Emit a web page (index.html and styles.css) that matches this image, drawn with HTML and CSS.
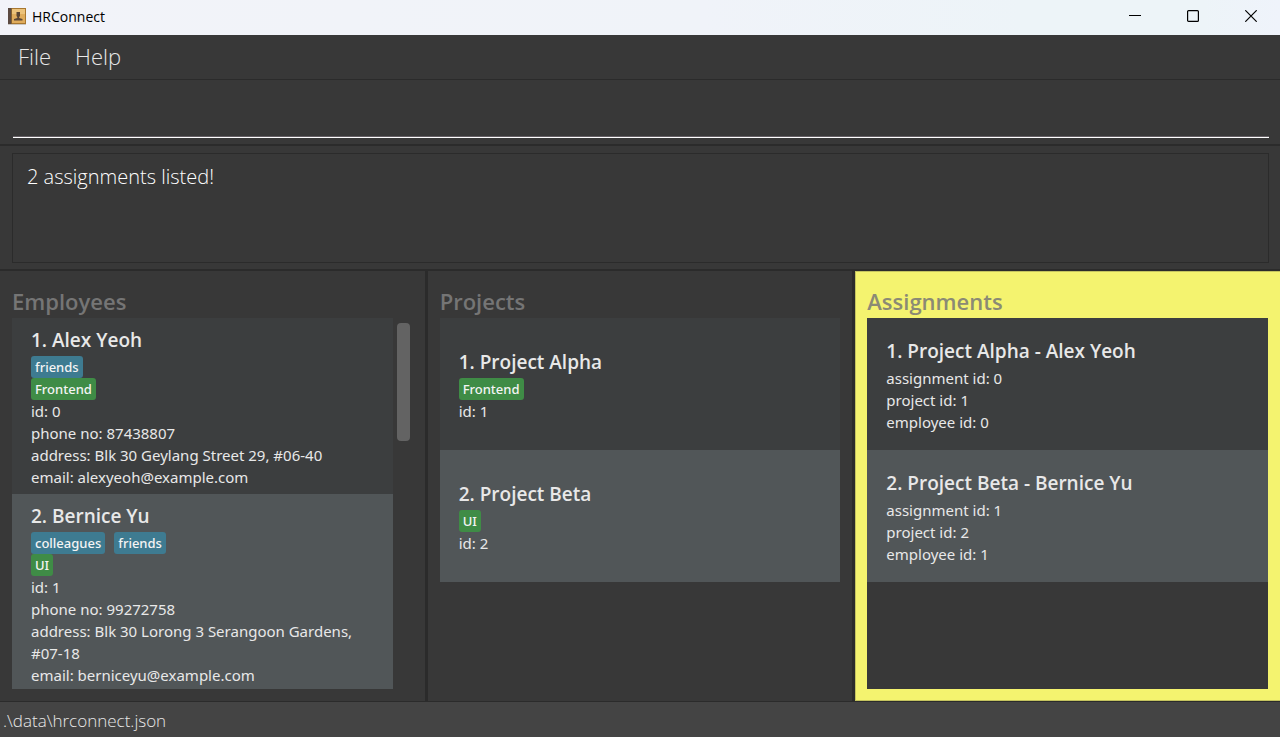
FILE: index.html
```html
<!DOCTYPE html>
<html lang="en">
<head>
<meta charset="utf-8">
<title>HRConnect</title>
<link rel="stylesheet" href="styles.css">
</head>
<body>
<header class="titlebar">
  <svg class="app-icon" width="18" height="17" viewBox="0 0 18 17" aria-hidden="true">
    <rect x="0" y="0" width="18" height="16" fill="#a8772f"/>
    <rect x="4" y="1" width="13" height="14" fill="#e0ac5c"/>
    <rect x="4" y="1" width="13" height="5" fill="#ecc27a"/>
    <rect x="0" y="0" width="3" height="16" fill="#5b4a42"/>
    <rect x="3" y="0" width="1" height="16" fill="#85602f"/>
    <path d="M8.500 4h3.500v4l-.8 1v1l3.300 1v1.500H6V11l3.300-1V9l-.8-1z" fill="#5a4535"/>
    <rect x="0" y="16" width="18" height="1" fill="#c9c5c2"/>
  </svg>
  <h1 class="app-name">HRConnect</h1>
  <div class="window-controls">
    <button class="window-button" aria-label="Minimize"><svg width="12" height="12" viewBox="0 0 12 12"><path d="M0 5.500h12" stroke="#000"/></svg></button>
    <button class="window-button" aria-label="Maximize"><svg width="12" height="12" viewBox="0 0 12 12"><rect x=".6" y=".6" width="10.800" height="10.800" rx="1" fill="none" stroke="#000" stroke-width="1.200"/></svg></button>
    <button class="window-button" aria-label="Close"><svg width="12" height="12" viewBox="0 0 12 12"><path d="M.3.300l11.400 11.400M11.700.300L.3 11.700" stroke="#000" stroke-width="1.200"/></svg></button>
  </div>
</header>
<nav class="menubar">
  <button class="menu">File</button>
  <button class="menu">Help</button>
</nav>
<div class="command-pane"><input class="command" type="text" aria-label="Command"></div>
<div class="result-pane"><output class="result">2 assignments listed!</output></div>
<main class="panels">
  <section class="panel">
    <h2 class="panel-title">Employees</h2>
    <div class="list-row">
      <ul class="list">
        <li class="card">
          <h3 class="name">1. Alex Yeoh</h3>
          <div class="tags"><span class="tag">friends</span></div>
          <div class="tags"><span class="tag skill">Frontend</span></div>
          <p>id: 0</p>
          <p>phone no: 87438807</p>
          <p>address: Blk 30 Geylang Street 29, #06-40</p>
          <p>email: alexyeoh@example.com</p>
        </li>
        <li class="card">
          <h3 class="name">2. Bernice Yu</h3>
          <div class="tags"><span class="tag">colleagues</span><span class="tag">friends</span></div>
          <div class="tags"><span class="tag skill">UI</span></div>
          <p>id: 1</p>
          <p>phone no: 99272758</p>
          <p>address: Blk 30 Lorong 3 Serangoon Gardens, #07-18</p>
          <p>email: berniceyu@example.com</p>
        </li>
      </ul>
      <div class="scrollbar"><div class="thumb"></div></div>
    </div>
  </section>
  <section class="panel">
    <h2 class="panel-title">Projects</h2>
    <div class="list-row">
      <ul class="list">
        <li class="card">
          <h3 class="name">1. Project Alpha</h3>
          <div class="tags"><span class="tag skill">Frontend</span></div>
          <p>id: 1</p>
        </li>
        <li class="card">
          <h3 class="name">2. Project Beta</h3>
          <div class="tags"><span class="tag skill">UI</span></div>
          <p>id: 2</p>
        </li>
      </ul>
    </div>
  </section>
  <section class="panel active">
    <h2 class="panel-title">Assignments</h2>
    <div class="list-row">
      <ul class="list">
        <li class="card">
          <h3 class="name">1. Project Alpha - Alex Yeoh</h3>
          <p>assignment id: 0</p>
          <p>project id: 1</p>
          <p>employee id: 0</p>
        </li>
        <li class="card">
          <h3 class="name">2. Project Beta - Bernice Yu</h3>
          <p>assignment id: 1</p>
          <p>project id: 2</p>
          <p>employee id: 1</p>
        </li>
      </ul>
    </div>
  </section>
</main>
<footer class="statusbar">.\data\hrconnect.json</footer>
</body>
</html>
```
FILE: styles.css
```css
* { box-sizing: border-box; }
body {
  margin: 0;
  height: 100vh;
  display: flex;
  flex-direction: column;
  overflow: hidden;
  background: #383838;
  color: #e8e8e8;
  font-family: "Open Sans", "Noto Sans", sans-serif;
  font-size: 15px;
  line-height: 22px;
}
h1, h2, h3, p, ul { margin: 0; padding: 0; }
button { border: 0; background: none; color: inherit; font: inherit; }

.titlebar {
  flex: none;
  display: flex;
  align-items: center;
  height: 35px;
  padding-left: 8px;
  background: linear-gradient(90deg, #f2f3f9 0%, #f0f3f9 55%, #edf4f8 80%, #edf4f8 94%, #eff3fb 100%);
  color: #000;
}
.app-icon { margin-bottom: 2px; }
.app-name { margin: 0 auto 2px 6px; font-size: 14px; font-weight: 400; }
.window-controls { display: flex; align-self: stretch; padding-bottom: 3px; }
.window-button { display: grid; place-items: center; width: 58px; padding: 0; }
.window-button:last-child { width: 58px; }

.menubar {
  flex: none;
  display: flex;
  gap: 24px;
  height: 45px;
  padding: 0 18px;
  border-bottom: 1px solid #2b2b2b;
}
.menu { padding: 0 0 2px; font-size: 22px; font-weight: 300; }

.command-pane { flex: none; padding: 10px 11px 6px 13px; }
.command {
  display: block;
  width: 100%;
  height: 48px;
  padding: 0;
  border: 0;
  border-bottom: 1px solid #fff;
  box-shadow: inset 0 -1px #656065;
  outline: 0;
  background: none;
  color: #fff;
  font: 300 22px "Open Sans", sans-serif;
}

.result-pane {
  flex: none;
  padding: 7px 11px 6px 12px;
  border-top: 2px solid #2b2b2b;
  border-bottom: 2px solid #2b2b2b;
}
.result {
  display: block;
  height: 110px;
  padding: 10px 14px;
  border: 1px solid #2b2b2b;
  color: #fff;
  font-size: 20px;
  font-weight: 300;
  line-height: 26px;
}

.panels {
  flex: 1;
  min-height: 0;
  display: grid;
  grid-template-columns: repeat(3, 1fr);
  grid-template-rows: 100%;
  gap: 3px;
  background: #2b2b2b;
}
.panel {
  min-width: 0;
  display: flex;
  flex-direction: column;
  padding: 14px 12px 12px;
  background: #383838;
}
.panel.active { background: #f4f36f; box-shadow: inset 1px 0 #c4c35f, inset 0 1px #c4c35f, inset 0 -1px #c4c35f; }
.panel-title { color: #757575; font-size: 22px; font-weight: 600; line-height: 33px; }
.active .panel-title { color: #8b8a75; }
.list-row { flex: 1; min-height: 0; display: flex; gap: 4px; }
.list { flex: 1; overflow: hidden; list-style: none; background: #383838; }
.card {
  display: flex;
  flex-direction: column;
  justify-content: center;
  min-height: 132px;
  padding: 8px 19px 6px;
  background: #3c3e3f;
}
.card:nth-child(even) { background: #515658; }
.card p { font-family: "Noto Sans", "Open Sans", sans-serif; }
.name { margin-bottom: 2px; font-size: 19px; font-weight: 600; line-height: 28px; }
.tags { display: flex; gap: 9px; }
.tag {
  padding: 0 4px;
  border-radius: 3px;
  background: #3e7b91;
  color: #f4f4f4;
  font-family: "Noto Sans", "Open Sans", sans-serif;
  font-size: 13px;
  font-weight: 500;
}
.tag.skill { background: #3f8c46; }
.scrollbar { width: 16px; padding: 5px 3px 0 0; }
.thumb { height: 118px; border-radius: 4px; background: #636363; }

.statusbar {
  flex: none;
  height: 36px;
  padding: 0 3px;
  border-top: 1px solid #2b2b2b;
  background: #444;
  font-size: 17px;
  font-weight: 300;
  line-height: 37px;
}
```
